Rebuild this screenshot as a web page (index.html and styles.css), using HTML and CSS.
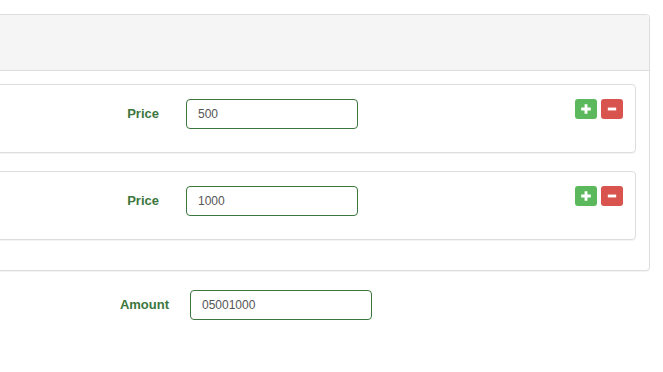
FILE: index.html
```html
<!DOCTYPE html>
<html lang="en">

<head>
    <meta charset="UTF-8">
    <meta name="viewport" content="width=device-width, initial-scale=1.0">
    <title>Prices</title>
    <link rel="stylesheet" href="styles.css">
</head>

<body>
    <div class="panel">
        <div class="panel-heading"></div>
        <div class="panel-body">
            <div class="item">
                <label class="label">Price</label>
                <input type="text" class="field" value="500">
                <div class="actions">
                    <button class="btn add"><svg viewBox="0 0 10 10"><path d="M3.8 1h2.4v2.8H9v2.4H6.2V9H3.8V6.2H1V3.8h2.8z"/></svg></button>
                    <button class="btn remove"><svg viewBox="0 0 10 10"><path d="M1.5 3.8h7v2.4h-7z"/></svg></button>
                </div>
            </div>
            <div class="item">
                <label class="label">Price</label>
                <input type="text" class="field" value="1000">
                <div class="actions">
                    <button class="btn add"><svg viewBox="0 0 10 10"><path d="M3.8 1h2.4v2.8H9v2.4H6.2V9H3.8V6.2H1V3.8h2.8z"/></svg></button>
                    <button class="btn remove"><svg viewBox="0 0 10 10"><path d="M1.5 3.8h7v2.4h-7z"/></svg></button>
                </div>
            </div>
        </div>
    </div>
    <div class="total">
        <label class="label total-label">Amount</label>
        <input type="text" class="field total-field" value="05001000">
    </div>
</body>

</html>
```

FILE: styles.css
```css
body {
    margin: 0;
    font-family: "Liberation Sans", Arial, sans-serif;
    background-color: #fff;
    overflow: hidden;
}

.panel {
    margin: 14px 13px 0 -30px;
    border: 1px solid #ddd;
    border-radius: 4px;
    box-shadow: 0 1px 1px rgba(0, 0, 0, 0.05);
}

.panel-heading {
    height: 55px;
    background-color: #f5f5f5;
    border-bottom: 1px solid #ddd;
    border-radius: 3px 3px 0 0;
}

.panel-body {
    padding: 13px 13px 12px 13px;
}

.item {
    display: flex;
    align-items: flex-start;
    padding: 14px 12px 23px 0;
    margin-bottom: 18px;
    border: 1px solid #ddd;
    border-radius: 4px;
    box-shadow: 0 1px 1px rgba(0, 0, 0, 0.05);
}

.label {
    width: 174px;
    flex-shrink: 0;
    margin-right: 27px;
    text-align: right;
    line-height: 30px;
    font-size: 13px;
    font-weight: bold;
    color: #3c763d;
}

.field {
    box-sizing: border-box;
    width: 172px;
    height: 30px;
    padding: 0 11px;
    border: 1px solid #3c763d;
    border-radius: 4px;
    font-family: "Liberation Sans", Arial, sans-serif;
    font-size: 12px;
    color: #555;
    background: #fff;
}

.actions {
    margin-left: auto;
    display: flex;
    gap: 4px;
}

.btn {
    width: 22px;
    height: 20px;
    padding: 0;
    border: none;
    border-radius: 3px;
    display: flex;
    align-items: center;
    justify-content: center;
}

.btn svg {
    width: 12px;
    height: 12px;
    fill: #fff;
}

.add {
    background-color: #5cb85c;
}

.remove {
    background-color: #d9534f;
}

.total {
    display: flex;
    margin-top: 19px;
}

.total-label {
    width: 169px;
    margin-right: 21px;
}

.total-field {
    width: 182px;
}
```
